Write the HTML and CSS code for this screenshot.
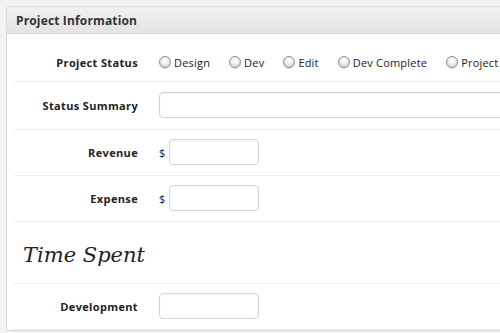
FILE: index.html
```html
<!DOCTYPE html>
<html>
<head>
<meta charset="utf-8">
<link rel="stylesheet" href="styles.css">
</head>
<body>
<div class="panel">
  <div class="panel-head">Project Information</div>
  <div class="panel-body">
    <div class="row first">
      <div class="label">Project Status</div>
      <div class="radios">
        <label class="opt"><input type="radio" name="st" class="radio">Design</label>
        <label class="opt"><input type="radio" name="st" class="radio">Dev</label>
        <label class="opt"><input type="radio" name="st" class="radio">Edit</label>
        <label class="opt"><input type="radio" name="st" class="radio">Dev Complete</label>
        <label class="opt"><input type="radio" name="st" class="radio">Project Complete</label>
      </div>
    </div>
    <div class="row tall">
      <div class="label">Status Summary</div>
      <input type="text" class="field wide">
    </div>
    <div class="row">
      <div class="label">Revenue</div>
      <span class="cur">$</span><input type="text" class="field money">
    </div>
    <div class="row">
      <div class="label">Expense</div>
      <span class="cur">$</span><input type="text" class="field money">
    </div>
    <div class="row section">
      <h2 class="section-title">Time Spent</h2>
    </div>
    <div class="row">
      <div class="label">Development</div>
      <input type="text" class="field short">
    </div>
  </div>
</div>
</body>
</html>
```
FILE: styles.css
```css
html, body {
  margin: 0;
  padding: 0;
}
body {
  background: #f3f3f3;
  padding: 6px 0 0 6px;
  font-family: "Open Sans", "DejaVu Sans", sans-serif;
  color: #222;
  overflow: hidden;
  width: 600px;
}
.panel {
  background: #fff;
  border: 1px solid #dcdcdc;
  border-right: none;
  border-radius: 3px 0 0 0;
}
.panel-head {
  height: 26px;
  line-height: 27px;
  padding-left: 9px;
  font-size: 12px;
  font-weight: 700;
  letter-spacing: 0.15px;
  color: #333;
  background: linear-gradient(#f1f1f1, #e3e3e3);
  border-bottom: 1px solid #d8d8d8;
}
.panel-body {
  padding-left: 7px;
}
.row {
  display: flex;
  align-items: center;
  padding: 9px 0 10px;
  border-bottom: 1px solid #ededed;
  min-height: 26px;
}
.row.tall {
  padding: 10px 0 11px;
}
.row.first {
  padding: 15px 0 6px;
}
.label {
  width: 124px;
  flex: none;
  text-align: right;
  margin-right: 21px;
  font-size: 11px;
  font-weight: 700;
  letter-spacing: 0.35px;
  color: #222;
}
.radios {
  display: flex;
  gap: 19px;
  white-space: nowrap;
}
.opt {
  display: flex;
  align-items: center;
  font-size: 11px;
  letter-spacing: 0.2px;
  color: #222;
}
.radio {
  appearance: none;
  -webkit-appearance: none;
  width: 12px;
  height: 12px;
  margin: 0 3px 0 0;
  border-radius: 50%;
  border: 1px solid #8e8e8e;
  background: radial-gradient(circle at 50% 35%, #ffffff 0%, #f0f0f0 40%, #c9c9c9 100%);
  box-shadow: 0 1px 1px rgba(0,0,0,0.15);
}
.field {
  height: 26px;
  box-sizing: border-box;
  border: 1px solid #d4d4d4;
  border-radius: 4px;
  background: #fff;
  box-shadow: inset 0 1px 1px rgba(0,0,0,0.04);
  margin: 0;
  padding: 0 4px;
  flex: none;
}
.wide { width: 400px; }
.money { width: 90px; }
.short { width: 100px; }
.cur {
  font-size: 11px;
  width: 10px;
  color: #222;
}
.row.section {
  padding: 4px 0 0;
  height: 57px;
}
.section-title {
  margin: 0 0 0 9px;
  font-family: "DejaVu Serif", Georgia, serif;
  font-style: italic;
  font-weight: 400;
  font-size: 21px;
  color: #222;
}
```
